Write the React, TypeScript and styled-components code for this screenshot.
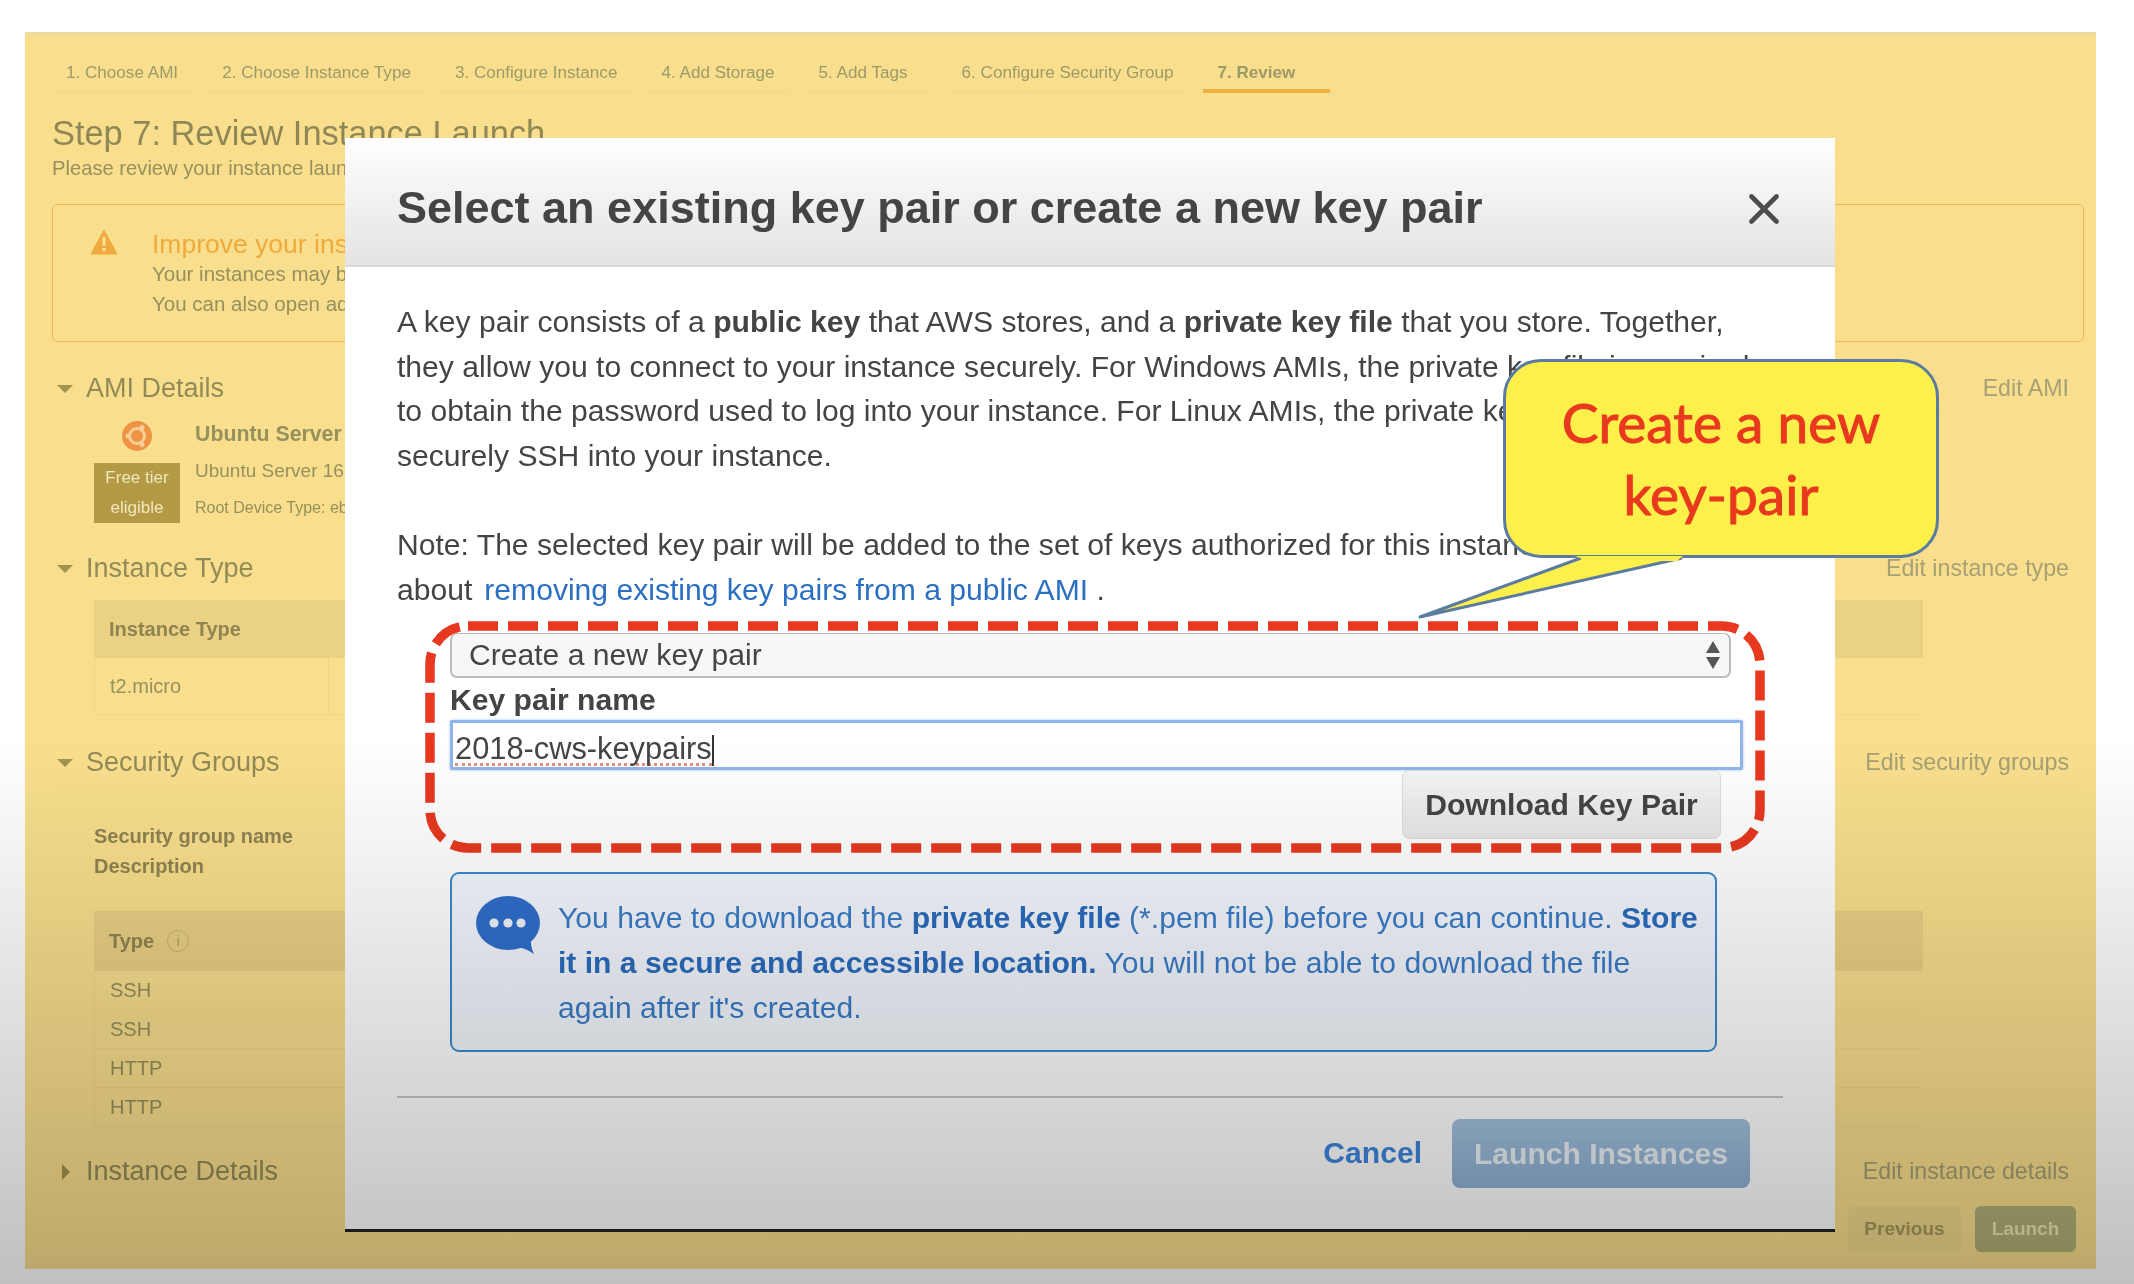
import React from 'react'
import styled, { createGlobalStyle } from 'styled-components'

const GlobalStyle = createGlobalStyle`
    html, body { margin: 0; padding: 0; background: #fff; }
    * { box-sizing: border-box; }
    body { font-family: "Liberation Sans", Arial, sans-serif; }
`

const Root = styled.div`
    position: relative;
    width: 2134px;
    height: 1284px;
    overflow: hidden;
    background: #fff;
    padding: 32px 38px 15px 25px;
`
const Panel = styled.div`
    height: 1237px;
    background: #f9df8d;
    border-top: 3px solid #f0dc9c;
    padding: 0 12px 0 27px;
    color: #96905c;
    filter: blur(0.7px);
`
const Tabs = styled.div`
    display: flex;
    gap: 16px;
    height: 58px;
`
const Tab = styled.div<{ $active?: boolean; $right?: number }>`
    padding: 28px ${(p) => p.$right ?? 14}px 0 14px;
    font-size: 17.1px;
    line-height: 20px;
    font-weight: ${(p) => (p.$active ? 700 : 400)};
    border-bottom: ${(p) => (p.$active ? '4px solid #efb042' : '2px solid #f4da8a')};
    color: #9c9a68;
`
const PageTitle = styled.div`
    margin-top: 20px;
    font-size: 34.4px;
    line-height: 40px;
    color: #8f8855;
`
const PageSub = styled.div`
    margin-top: 2px;
    font-size: 20.2px;
    line-height: 26px;
`
const Warning = styled.div`
    margin-top: 23px;
    height: 138px;
    border: 1.5px solid #efb85a;
    border-radius: 5px;
    display: flex;
    padding: 24px 0 0 37px;
    gap: 34px;
`
const WarningTitle = styled.div`
    font-size: 26.5px;
    line-height: 30px;
    color: #efaa3c;
`
const WarningLine = styled.div`
    font-size: 20.5px;
    line-height: 30px;
`
const SectionHead = styled.div<{ $top: number }>`
    margin-top: ${(p) => p.$top}px;
    height: 44px;
    display: flex;
    align-items: center;
    padding: 0 15px 0 5px;
    border-bottom: 1px solid #f6db88;
`
const Caret = styled.span<{ $open?: boolean }>`
    width: 0;
    height: 0;
    margin-right: ${(p) => (p.$open ? 13 : 16)}px;
    border-style: solid;
    ${(p) =>
        p.$open
            ? 'border-width: 8px 8px 0 8px; border-color: #a3934f transparent transparent transparent;'
            : 'border-width: 8px 0 8px 8px; border-color: transparent transparent transparent #a3934f; margin-left: 5px;'}
`
const SectionName = styled.div`
    font-size: 27px;
    color: #928b57;
`
const EditLink = styled.div`
    margin-left: auto;
    font-size: 23.2px;
    color: #a6a074;
`
const AmiBody = styled.div`
    display: flex;
    gap: 15px;
    padding-left: 42px;
`
const AmiLeft = styled.div`
    width: 86px;
    padding-top: 10px;
    display: flex;
    flex-direction: column;
    align-items: center;
    gap: 12px;
`
const FreeTier = styled.div`
    width: 86px;
    height: 60px;
    background: #b49a45;
    color: #f2e7bd;
    font-size: 17px;
    line-height: 30px;
    text-align: center;
`
const AmiRight = styled.div`
    padding-top: 10px;
    display: flex;
    flex-direction: column;
    gap: 11px;
`
const AmiLine = styled.div<{ $bold?: boolean; $small?: boolean }>`
    font-size: ${(p) => (p.$small ? 16 : p.$bold ? 21.3 : 19)}px;
    font-weight: ${(p) => (p.$bold ? 700 : 400)};
    line-height: 26px;
`
const Table = styled.div`
    margin-left: 42px;
    width: 1829px;
`
const TableHead = styled.div<{ $h: number; $top: number }>`
    margin-top: ${(p) => p.$top}px;
    height: ${(p) => p.$h}px;
    background: #ebd184;
    display: flex;
    align-items: center;
    padding-left: 15px;
    font-size: 20px;
    font-weight: 700;
    color: #8f8450;
    gap: 13px;
`
const TableRow = styled.div<{ $h: number }>`
    height: ${(p) => p.$h}px;
    display: flex;
    align-items: center;
    padding-left: 15px;
    font-size: 20px;
    border-bottom: 1px solid #f2d788;
    border-left: 1px solid #f2d788;
    position: relative;
`
const CellRule = styled.span`
    position: absolute;
    left: 233px;
    top: 0;
    bottom: 0;
    width: 1px;
    background: #f0d483;
`
const GroupMeta = styled.div`
    margin: 36px 0 0 42px;
    font-size: 20px;
    font-weight: 700;
    line-height: 30px;
    color: #8f8450;
`
const InfoDot = styled.span`
    width: 22px;
    height: 22px;
    border: 1.5px solid #c9b36a;
    border-radius: 50%;
    font-size: 15px;
    font-weight: 400;
    line-height: 19px;
    text-align: center;
    color: #b09e5c;
`
const PageFooter = styled.div`
    margin-top: 12px;
    display: flex;
    justify-content: flex-end;
    gap: 14px;
    padding-right: 8px;
`
const PageButton = styled.div<{ $primary?: boolean }>`
    height: 46px;
    width: ${(p) => (p.$primary ? 101 : 113)}px;
    border-radius: 6px;
    font-size: 19px;
    font-weight: 700;
    line-height: 46px;
    text-align: center;
    background: ${(p) => (p.$primary ? '#b0b075' : '#f1d98b')};
    color: ${(p) => (p.$primary ? '#ece6b4' : '#a89a58')};
`

const Modal = styled.div`
    position: absolute;
    left: 345px;
    top: 138px;
    width: 1490px;
    height: 1094px;
    background: #fff;
    border-bottom: 3px solid #222;
    color: #444;
    filter: blur(0.45px);
`
const ModalHead = styled.div`
    height: 129px;
    background: linear-gradient(to bottom, #fff, #e3e3e3);
    border-bottom: 2px solid #d9d9d9;
    display: flex;
    justify-content: space-between;
    padding: 46px 56px 0 52px;
`
const ModalTitle = styled.div`
    font-size: 45px;
    line-height: 48px;
    font-weight: 700;
    color: #444;
`
const ModalBody = styled.div`
    padding: 33px 52px 0;
    font-size: 30.1px;
    line-height: 44.7px;
`
const Para = styled.p`
    margin: 0 0 44px;
`
const Strong = styled.b`
    font-weight: 700;
`
const BlueLink = styled.span`
    color: #2b6fc2;
    margin-left: 12px;
`
const KeyForm = styled.div`
    position: relative;
    margin: -23px 0 0 53px;
`
const DashedFrame = styled.svg`
    position: absolute;
    left: -25px;
    top: -12px;
`
const SelectBox = styled.div`
    width: 1281px;
    height: 45px;
    border: 2px solid #bbb;
    border-top-width: 1px;
    border-radius: 7px;
    background: #f7f7f7;
    display: flex;
    align-items: center;
    justify-content: space-between;
    padding: 0 9px 0 17px;
    line-height: 42px;
`
const FieldLabel = styled.div`
    margin-top: 3px;
    font-weight: 700;
    line-height: 38px;
`
const InputBox = styled.div`
    margin-top: 1px;
    width: 1293px;
    height: 50px;
    border: 3px solid #8fb5ea;
    box-shadow: 0 0 3px #a9c8f0;
    border-radius: 2px;
    background: #fff;
    padding: 10px 0 0 2px;
    font-size: 30.8px;
    display: flex;
    align-items: center;
`
const Misspelt = styled.span`
    line-height: 28px;
    border-bottom: 3px dotted #e88f85;
`
const TextCaret = styled.span`
    width: 2px;
    height: 31px;
    background: #333;
`
const ButtonRow = styled.div`
    width: 1271px;
    display: flex;
    justify-content: flex-end;
`
const DownloadButton = styled.div`
    width: 319px;
    height: 69px;
    border: 1px solid #ddd;
    border-radius: 7px;
    background: linear-gradient(to bottom, #f6f6f6, #e6e6e6);
    font-weight: 700;
    line-height: 67px;
    text-align: center;
    color: #444;
`
const InfoBox = styled.div`
    margin: 33px 0 0 53px;
    width: 1267px;
    height: 180px;
    border: 2px solid #3a8ad0;
    border-radius: 9px;
    background: #f3f8fe;
    display: flex;
    gap: 18px;
    padding: 22px 0 0 24px;
`
const InfoText = styled.div`
    color: #3a7cc8;
    b { color: #2a6cbe; }
`
const Divider = styled.div`
    margin-top: 44px;
    height: 2px;
    background: #c8c8c8;
    width: 1386px;
`
const ModalFooter = styled.div`
    margin-top: 21px;
    width: 1353px;
    display: flex;
    justify-content: flex-end;
    align-items: center;
    gap: 30px;
`
const CancelLink = styled.div`
    font-weight: 700;
    color: #3c86de;
`
const LaunchButton = styled.div`
    width: 298px;
    height: 69px;
    border-radius: 8px;
    background: linear-gradient(to bottom, #a3c2de, #8fb1d4);
    color: #ecf2f8;
    font-weight: 700;
    line-height: 69px;
    text-align: center;
`
const Shade = styled.div`
    position: absolute;
    inset: 0;
    pointer-events: none;
    mix-blend-mode: multiply;
    background: linear-gradient(to bottom, #fff 0, #fff 740px, #c0c0c0 1284px);
`
const Callout = styled.div`
    position: absolute;
    left: 1503px;
    top: 359px;
    width: 436px;
    height: 199px;
    border: 3px solid #5b7ca0;
    border-radius: 38px;
    background: #fdf04a;
    color: #e8391f;
    font-family: Lato, "Open Sans", sans-serif;
    font-size: 55px;
    -webkit-text-stroke: 1px #e8391f;
    line-height: 72px;
    text-align: center;
    padding-top: 24px;
    filter: blur(0.4px);
`
const CalloutTail = styled.svg`
    position: absolute;
    left: 1415px;
    top: 552px;
    filter: blur(0.4px);
`

const TriangleIcon = () => (
    <svg width="28" height="26" viewBox="0 0 28 26">
        <path d="M14 1 L27 25 H1 Z" fill="#efa93f" stroke="#efa93f" strokeLinejoin="round" />
        <rect x="12.4" y="8" width="3.2" height="9" fill="#f9df8d" />
        <rect x="12.4" y="19" width="3.2" height="3.2" fill="#f9df8d" />
    </svg>
)

const UbuntuIcon = () => (
    <svg width="30" height="30" viewBox="0 0 30 30">
        <circle cx="15" cy="15" r="15" fill="#ee9343" />
        <circle cx="15" cy="15" r="7.5" fill="none" stroke="#f7cf95" strokeWidth="3" />
        <circle cx="6" cy="15" r="2.5" fill="#f7cf95" />
        <circle cx="20" cy="6.5" r="2.5" fill="#f7cf95" />
        <circle cx="20" cy="23.5" r="2.5" fill="#f7cf95" />
    </svg>
)

const CloseIcon = () => (
    <svg width="30" height="30" viewBox="0 0 30 30" style={{ marginTop: 10 }}>
        <path d="M2.5 2.5 L27.5 27.5 M27.5 2.5 L2.5 27.5" stroke="#4c4c4c" strokeWidth="4.6" strokeLinecap="round" />
    </svg>
)

const SortArrows = () => (
    <svg width="14" height="28" viewBox="0 0 14 28">
        <path d="M7 0 L14 12 H0 Z M0 16 H14 L7 28 Z" fill="#555" />
    </svg>
)

const ChatIcon = () => (
    <svg width="64" height="60" viewBox="0 0 64 60" style={{ flexShrink: 0 }}>
        <ellipse cx="32" cy="27" rx="32" ry="27" fill="#2f6fcc" />
        <path d="M40 51 Q50 52 58 58 Q54 50 55 40 Z" fill="#2f6fcc" />
        <circle cx="18" cy="27" r="4.6" fill="#f0f5fb" />
        <circle cx="32" cy="27" r="4.6" fill="#f0f5fb" />
        <circle cx="45" cy="27" r="4.6" fill="#f0f5fb" />
    </svg>
)

const App = () => {
    return (
        <Root>
            <GlobalStyle />
            <Panel>
                <Tabs>
                    <Tab>1. Choose AMI</Tab>
                    <Tab>2. Choose Instance Type</Tab>
                    <Tab>3. Configure Instance</Tab>
                    <Tab>4. Add Storage</Tab>
                    <Tab $right={24}>5. Add Tags</Tab>
                    <Tab>6. Configure Security Group</Tab>
                    <Tab $active $right={35}>7. Review</Tab>
                </Tabs>
                <PageTitle>Step 7: Review Instance Launch</PageTitle>
                <PageSub>Please review your instance launch details.</PageSub>
                <Warning>
                    <TriangleIcon />
                    <div>
                        <WarningTitle>Improve your instances' security.</WarningTitle>
                        <WarningLine>Your instances may be accessible from any IP address.</WarningLine>
                        <WarningLine>You can also open additional ports in your security group.</WarningLine>
                    </div>
                </Warning>

                <SectionHead $top={25}>
                    <Caret $open />
                    <SectionName>AMI Details</SectionName>
                    <EditLink>Edit AMI</EditLink>
                </SectionHead>
                <AmiBody>
                    <AmiLeft>
                        <UbuntuIcon />
                        <FreeTier>
                            Free tier
                            <br />
                            eligible
                        </FreeTier>
                    </AmiLeft>
                    <AmiRight>
                        <AmiLine $bold>Ubuntu Server</AmiLine>
                        <AmiLine>Ubuntu Server 16.04</AmiLine>
                        <AmiLine $small>Root Device Type: ebs</AmiLine>
                    </AmiRight>
                </AmiBody>

                <SectionHead $top={24}>
                    <Caret $open />
                    <SectionName>Instance Type</SectionName>
                    <EditLink>Edit instance type</EditLink>
                </SectionHead>
                <Table>
                    <TableHead $h={58} $top={9}>Instance Type</TableHead>
                    <TableRow $h={57}>
                        t2.micro
                        <CellRule />
                    </TableRow>
                </Table>

                <SectionHead $top={26}>
                    <Caret $open />
                    <SectionName>Security Groups</SectionName>
                    <EditLink>Edit security groups</EditLink>
                </SectionHead>
                <GroupMeta>
                    Security group name
                    <br />
                    Description
                </GroupMeta>
                <Table>
                    <TableHead $h={60} $top={30}>
                        Type <InfoDot>i</InfoDot>
                    </TableHead>
                    <TableRow $h={39}>SSH</TableRow>
                    <TableRow $h={39}>SSH</TableRow>
                    <TableRow $h={39}>HTTP</TableRow>
                    <TableRow $h={39}>HTTP</TableRow>
                </Table>

                <SectionHead $top={23}>
                    <Caret />
                    <SectionName>Instance Details</SectionName>
                    <EditLink>Edit instance details</EditLink>
                </SectionHead>
                <PageFooter>
                    <PageButton>Previous</PageButton>
                    <PageButton $primary>Launch</PageButton>
                </PageFooter>
            </Panel>

            <Modal>
                <ModalHead>
                    <ModalTitle>Select an existing key pair or create a new key pair</ModalTitle>
                    <CloseIcon />
                </ModalHead>
                <ModalBody>
                    <Para>
                        A key pair consists of a <Strong>public key</Strong> that AWS stores, and a <Strong>private key file</Strong> that you store. Together,
                        <br />
                        they allow you to connect to your instance securely. For Windows AMIs, the private key file is required
                        <br />
                        to obtain the password used to log into your instance. For Linux AMIs, the private key file allows you to
                        <br />
                        securely SSH into your instance.
                    </Para>
                    <Para>
                        Note: The selected key pair will be added to the set of keys authorized for this instance. Learn more
                        <br />
                        about<BlueLink>removing existing key pairs from a public AMI</BlueLink> .
                    </Para>
                    <KeyForm>
                        <DashedFrame width="1341" height="232" viewBox="0 0 1341 232">
                            <rect
                                x="5"
                                y="5"
                                width="1330"
                                height="222"
                                rx="38"
                                fill="none"
                                stroke="#e8381f"
                                strokeWidth="9.5"
                                strokeDasharray="30 10"
                            />
                        </DashedFrame>
                        <SelectBox>
                            Create a new key pair
                            <SortArrows />
                        </SelectBox>
                        <FieldLabel>Key pair name</FieldLabel>
                        <InputBox>
                            <Misspelt>2018-cws-keypairs</Misspelt>
                            <TextCaret />
                        </InputBox>
                        <ButtonRow>
                            <DownloadButton>Download Key Pair</DownloadButton>
                        </ButtonRow>
                    </KeyForm>
                    <InfoBox>
                        <ChatIcon />
                        <InfoText>
                            You have to download the <Strong>private key file</Strong> (*.pem file) before you can continue. <Strong>Store</Strong>
                            <br />
                            <Strong>it in a secure and accessible location.</Strong> You will not be able to download the file
                            <br />
                            again after it's created.
                        </InfoText>
                    </InfoBox>
                    <Divider />
                    <ModalFooter>
                        <CancelLink>Cancel</CancelLink>
                        <LaunchButton>Launch Instances</LaunchButton>
                    </ModalFooter>
                </ModalBody>
            </Modal>

            <Shade />

            <CalloutTail width="280" height="70" viewBox="0 0 280 70">
                <path d="M166 6 L5 65 L267 6" fill="#fdf04a" stroke="#5b7ca0" strokeWidth="3" strokeLinejoin="round" />
            </CalloutTail>
            <Callout>
                Create a new
                <br />
                key-pair
            </Callout>
            <CalloutTail width="280" height="70" viewBox="0 0 280 70">
                <path d="M160 4 L172 9 H262 L268 4 Z" fill="#fdf04a" />
            </CalloutTail>
        </Root>
    )
}

export default App
